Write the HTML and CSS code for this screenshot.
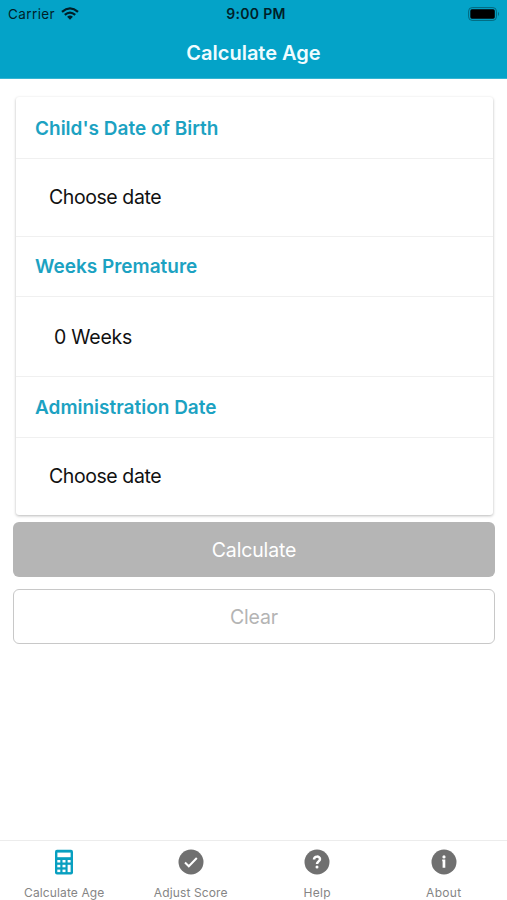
FILE: index.html
```html
<!DOCTYPE html>
<html lang="en">
<head>
<meta charset="utf-8">
<title>Calculate Age</title>
<link rel="stylesheet" href="styles.css">
</head>
<body>
<div class="app">
  <header class="header">
    <div class="status">
      <div class="carrier"><span>Carrier</span>
        <svg width="18" height="13" viewBox="0 0 18 13" fill="none" stroke="#001f28" stroke-width="2.3"><path d="M1 4.8Q9-2 17 4.8M3.8 7.8Q9 3.4 14.2 7.8"/><path d="M9 12.7L6.1 9.8Q9 7.4 11.9 9.8Z" fill="#001f28" stroke="none"/></svg>
      </div>
      <span class="time">9:00 PM</span>
      <svg class="battery" width="32" height="14" viewBox="0 0 32 14"><rect x=".6" y=".6" width="27.8" height="12.8" rx="3.5" fill="none" stroke="#03677d" stroke-width="1"/><rect x="2.3" y="2.3" width="24.5" height="9.4" rx="1.6"/><path d="M30 4.8Q32 7 30 9.2Z" fill="#03677d"/></svg>
    </div>
    <h1 class="title">Calculate Age</h1>
  </header>
  <main class="content">
    <section class="card">
      <h2 class="label first">Child's Date of Birth</h2>
      <div class="value">Choose date</div>
      <h2 class="label middle">Weeks Premature</h2>
      <div class="value tall">0 Weeks</div>
      <h2 class="label">Administration Date</h2>
      <div class="value last">Choose date</div>
    </section>
    <button class="btn primary">Calculate</button>
    <button class="btn outline">Clear</button>
  </main>
  <nav class="tabs">
    <a class="tab"><svg width="26" height="26" viewBox="0 0 26 26"><rect x="4" y=".8" width="18" height="24.6" rx="2" fill="#089fc0"/><g fill="#fff"><rect x="6.4" y="3.6" width="13.2" height="4.6"/><rect x="6.3" y="11" width="3" height="2.5"/><rect x="11.5" y="11" width="3" height="2.5"/><rect x="16.6" y="11" width="3" height="2.5"/><rect x="6.3" y="15.8" width="3" height="2.5"/><rect x="11.5" y="15.8" width="3" height="2.5"/><rect x="6.3" y="20.6" width="3" height="2.5"/><rect x="11.5" y="20.6" width="3" height="2.5"/><rect x="16.6" y="15.8" width="3" height="7.3"/></g></svg><span>Calculate Age</span></a>
    <a class="tab"><svg width="26" height="26" viewBox="0 0 26 26"><circle cx="13" cy="13" r="12.5" fill="#707070"/><path d="M7 13.5l3.8 3.8 8-8.3" fill="none" stroke="#fff" stroke-width="2"/></svg><span>Adjust Score</span></a>
    <a class="tab"><svg width="26" height="26" viewBox="0 0 26 26"><circle cx="13" cy="13" r="12.5" fill="#707070"/><path d="M10 10.5c0-3.7 6-3.8 6-.5 0 2.3-3 2.5-3 5.1" fill="none" stroke="#fff" stroke-width="2.5"/><circle cx="13" cy="17.9" r="1.5" fill="#fff"/></svg><span class="wide">Help</span></a>
    <a class="tab"><svg width="26" height="26" viewBox="0 0 26 26"><circle cx="13" cy="13" r="12.5" fill="#707070"/><path d="M11.2 10.4h3.1V18.8h-2.7v-6.6h-.4z" fill="#fff"/><circle cx="13" cy="7.9" r="1.6" fill="#fff"/></svg><span class="wide">About</span></a>
  </nav>
</div>
</body>
</html>
```
FILE: styles.css
```css
* { box-sizing: border-box; }
body { margin: 0; background: #fff; font-family: Inter, "Liberation Sans", sans-serif; }
.app { height: 900px; display: flex; flex-direction: column; overflow: hidden; }
.header { height: 79px; background: #04a3c8; border-bottom: 1px solid #35b5d2; flex: none; }
.status { height: 27px; padding: 0 7px 0 8px; display: grid; grid-template-columns: 1fr auto 1fr; align-items: center; color: #001f28; font-size: 13.5px; }
.carrier { display: flex; align-items: center; gap: 6px; letter-spacing: .4px; }
.time { font-weight: 600; font-size: 14px; letter-spacing: .3px; padding-left: 4px; }
.battery { justify-self: end; }
.title { margin: 0; height: 51px; line-height: 52px; text-align: center; color: #effcff; font-size: 20px; font-weight: 600; }
.content { flex: 1; padding: 18px 12px 0 13px; }
.card { margin: 0 2px 0 3px; height: 418px; border-radius: 3px; box-shadow: 0 1px 3px rgba(0,0,0,.28); }
.label { margin: 0; height: 61px; line-height: 62px; padding-left: 19px; color: #1ca2c2; font-size: 19px; font-weight: 600; border-bottom: 1px solid #f0f0f0; }
.label.first { height: 62px; line-height: 63px; }
.label.middle { height: 60px; line-height: 60px; }
.value { height: 78px; line-height: 77px; padding-left: 33px; color: #111; font-size: 19.5px; letter-spacing: -.42px; border-bottom: 1px solid #f0f0f0; }
.value.tall { height: 80px; line-height: 80px; padding-left: 38px; letter-spacing: -.25px; }
.value.last { height: 77px; line-height: 77px; border: 0; }
.btn { display: block; width: 100%; height: 55px; border-radius: 6px; font: 400 19.5px Inter, sans-serif; letter-spacing: -.15px; padding: 0; }
.primary { margin-top: 7px; border: 0; background: #b5b5b5; color: #fff; }
.outline { margin-top: 12px; border: 1.5px solid #c8c8c8; background: #fff; color: #b4b4b4; }
.tabs { flex: none; height: 60px; border-top: 1px solid #ececec; display: grid; grid-template-columns: repeat(4, 1fr); padding-left: 1px; }
.tab { display: flex; flex-direction: column; align-items: center; padding-top: 8px; gap: 9px; font-size: 12px; line-height: 17px; color: #858585; letter-spacing: .12px; }
.tab svg { flex: none; }
.wide { letter-spacing: .3px; }
```
